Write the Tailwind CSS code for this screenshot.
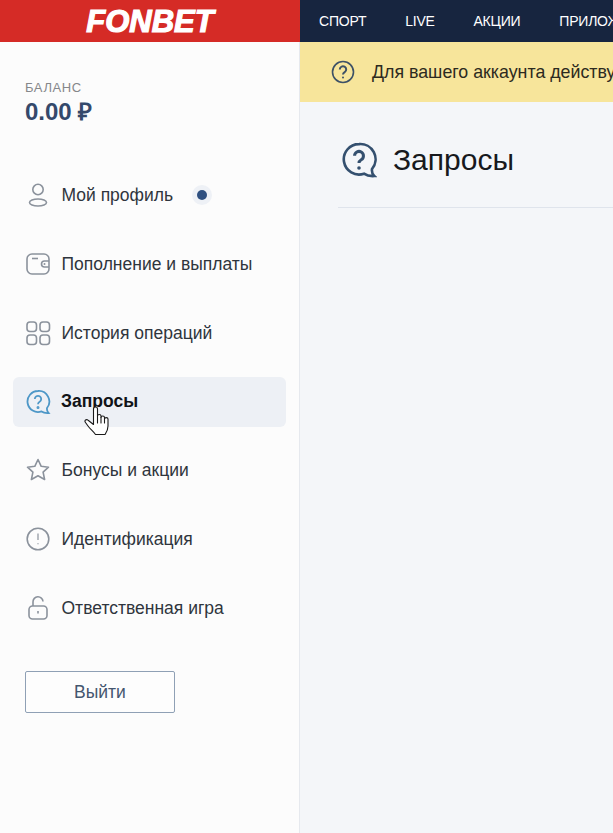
<!DOCTYPE html>
<html>
<head>
    <meta charset="utf-8">
    <title>Запросы</title>
    <script src="https://cdn.jsdelivr.net/npm/@tailwindcss/browser@4"></script>
</head>
<body class="bg-[#f4f6f9] font-['Liberation_Sans',Arial,sans-serif] w-[613px] h-[833px] overflow-hidden">
    <header class="flex h-[42px]">
        <div class="w-[300px] shrink-0 bg-[#d52b26] flex items-center justify-center">
            <span class="text-white text-[31px] leading-none font-bold italic tracking-[0px] [-webkit-text-stroke:1.2px_white]">FONBET</span>
        </div>
        <nav class="flex-1 bg-[#17253f] flex items-center pl-[19px] gap-[38.8px] text-[14px] tracking-[-0.2px] text-white whitespace-nowrap overflow-hidden">
            <span>СПОРТ</span>
            <span>LIVE</span>
            <span>АКЦИИ</span>
            <span>ПРИЛОЖЕНИЯ</span>
        </nav>
    </header>

    <div class="flex h-[791px]">
        <aside class="w-[300px] shrink-0 bg-[#fcfcfc] border-r border-[#e6e9ee] px-[13px] pt-[39px]">
            <div class="pl-[12px]">
                <div class="text-[13px] leading-[14px] tracking-[0.6px] text-[#85878a]">БАЛАНС</div>
                <div class="mt-[3px] text-[24px] leading-[28px] font-bold text-[#34496b]">0.00 ₽</div>
            </div>

            <ul class="mt-[44px] flex flex-col gap-[19px] text-[17.5px] text-[#2f353d]">
                <li class="h-[50px] flex items-center pl-[12px]">
                    <svg class="w-[26px] h-[26px] mr-[10.5px]" viewBox="0 0 26 26" fill="none" stroke="#8b929c" stroke-width="1.6"><circle cx="13" cy="7.500" r="5.200"/><ellipse cx="13" cy="20.500" rx="8.500" ry="3.500"/></svg>
                    <span>Мой профиль</span>
                    <span class="ml-[19px] w-[20px] h-[20px] rounded-full bg-[#eef1f6] flex items-center justify-center"><span class="w-[10px] h-[10px] rounded-full bg-[#2f5080]"></span></span>
                </li>
                <li class="h-[50px] flex items-center pl-[12px]">
                    <svg class="w-[26px] h-[26px] mr-[10.5px]" viewBox="0 0 26 26" fill="none" stroke="#8b929c" stroke-width="1.6"><rect x="2" y="3" width="22" height="20" rx="5"/><path d="M7 7.500h6"/><path d="M24 10h-4.500a3 3 0 0 0 0 6H24"/><circle cx="19.500" cy="13" r="1" fill="#8b929c" stroke="none"/></svg>
                    <span>Пополнение и выплаты</span>
                </li>
                <li class="h-[50px] flex items-center pl-[12px]">
                    <svg class="w-[26px] h-[26px] mr-[10.5px]" viewBox="0 0 26 26" fill="none" stroke="#8b929c" stroke-width="1.6"><rect x="2" y="2" width="9.500" height="9.500" rx="3"/><rect x="15" y="2" width="9.500" height="9.500" rx="3"/><rect x="2" y="15" width="9.500" height="9.500" rx="3"/><rect x="15" y="15" width="9.500" height="9.500" rx="3"/></svg>
                    <span>История операций</span>
                </li>
                <li class="relative h-[50px] -mb-[1px] flex items-center pl-[12px] rounded-md bg-[#edf0f5] font-bold text-[#111317] text-[17.5px]">
                    <svg class="w-[26px] h-[26px] mr-[10px]" viewBox="0 0 26 26" fill="none" stroke="#4d97c7" stroke-width="1.8"><path d="M13 2a10.500 10.500 0 1 0 3.500 20.400c1.800 1.300 4 1.800 7 1.600-1.300-1.300-1.800-2.800-1.500-5A10.500 10.500 0 0 0 13 2z"/><path d="M9.800 10a3.200 3.200 0 1 1 4.800 2.800c-1 .6-1.600 1.200-1.600 2.400"/><circle cx="13" cy="18.500" r=".6" fill="#4d97c7"/></svg>
                    <span class="-mt-[2px]">Запросы</span>
                    <svg class="absolute left-[71px] top-[26px] w-[26px] h-[36px]" viewBox="0 0 26 36" fill="#fff" stroke="#1a1a1a" stroke-width="1.100" stroke-linejoin="round" stroke-linecap="round"><path d="M9.500 6c0-2.600 4-2.600 4 0v7c0-2 3.500-2 3.500 0v1.500c0-2 3.500-2 3.500 0V16c0-1.800 3.500-1.800 3.500 0v7c0 4-1.500 6-3 8.500H11.500c-2-3-5-5-7.500-8.500l-2.500-3.500c-1.500-2 .8-3.800 2.600-2.300l5.400 4.300z"/><path d="M13.500 13v7M17 14.500v5.500M20.500 16v4" fill="none"/></svg>
                </li>
                <li class="h-[50px] flex items-center pl-[12px]">
                    <svg class="w-[26px] h-[26px] mr-[10.5px]" viewBox="0 0 26 26" fill="none" stroke="#8b929c" stroke-width="1.600" stroke-linejoin="round"><path d="M13 2.500l3.200 6.800 7.300.9-5.400 5 1.500 7.300-6.600-3.700-6.600 3.700 1.500-7.300-5.400-5 7.300-.9z"/></svg>
                    <span>Бонусы и акции</span>
                </li>
                <li class="h-[50px] flex items-center pl-[12px]">
                    <svg class="w-[26px] h-[26px] mr-[10.5px]" viewBox="0 0 26 26" fill="none" stroke="#8b929c" stroke-width="1.600"><circle cx="13" cy="13" r="10.800"/><path d="M13 7.500v6.500" stroke-width="1.200"/><path d="M13 17.300v1" stroke-width="1.200"/></svg>
                    <span>Идентификация</span>
                </li>
                <li class="h-[50px] flex items-center pl-[12px]">
                    <svg class="w-[26px] h-[26px] mr-[10.5px]" viewBox="0 0 26 26" fill="none" stroke="#8b929c" stroke-width="1.600"><rect x="4" y="11" width="18" height="13" rx="3.500"/><path d="M8 11V7a5 5 0 0 1 10-.5"/><path d="M13 16v2.500"/></svg>
                    <span>Ответственная игра</span>
                </li>
            </ul>

            <button class="mt-[38px] ml-[12px] w-[150px] h-[42px] border border-[#8fa0b5] rounded-[2px] text-[17.5px] text-[#44566f] bg-white/40">Выйти</button>
        </aside>

        <main class="flex-1 min-w-0">
            <div class="h-[60px] bg-[#f7e59b] flex items-center pl-[31px] whitespace-nowrap overflow-hidden">
                <svg class="w-[24px] h-[24px] mr-[17px] shrink-0" viewBox="0 0 24 24" fill="none" stroke="#3d5166" stroke-width="1.600"><circle cx="12" cy="12" r="10.500"/><path d="M8.800 9.500a3.200 3.200 0 1 1 4.900 2.700c-1.100.7-1.700 1.200-1.700 2.300" stroke-width="2"/><circle cx="12" cy="17.500" r="1" fill="#3d5166" stroke="none"/></svg>
                <span class="text-[17.8px] text-[#2c2a20]">Для вашего аккаунта действует ограничение</span>
            </div>
            <div class="ml-[38px] h-[106px] pt-[10px] border-b border-[#dfe4ec] flex items-center">
                <svg class="w-[36px] h-[36px] ml-[3px] mr-[16px] shrink-0" viewBox="0 0 26 26" fill="none" stroke="#34506f" stroke-width="1.900"><path d="M13 1.500a11 11 0 1 0 3.600 21.400c1.900 1.300 4.200 1.900 7.400 1.700-1.400-1.300-1.900-2.900-1.600-5.100A11 11 0 0 0 13 1.500z"/><path d="M9.800 10a3.200 3.200 0 1 1 4.800 2.800c-1 .6-1.600 1.200-1.600 2.400" stroke-width="2.200"/><circle cx="13" cy="18.800" r="1.300" fill="#34506f" stroke="none"/></svg>
                <h1 class="text-[30px] leading-none text-[#17191d]">Запросы</h1>
            </div>
        </main>
    </div>
</body>
</html>
